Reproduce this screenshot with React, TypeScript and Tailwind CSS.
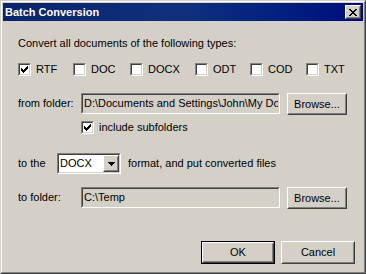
import React from "react";

function Pixels({ rows, color = "#000000" }: { rows: string[]; color?: string }) {
  const rects: React.ReactElement[] = [];
  rows.forEach((r, y) => {
    for (let x = 0; x < r.length; x++) {
      if (r[x] === "X") rects.push(<rect key={`${x}-${y}`} x={x} y={y} width={1} height={1} />);
    }
  });
  return (
    <svg
      width={rows[0].length}
      height={rows.length}
      viewBox={`0 0 ${rows[0].length} ${rows.length}`}
      shapeRendering="crispEdges"
      fill={color}
      className="block"
    >
      {rects}
    </svg>
  );
}

const CHECK = [
  "......X",
  ".....XX",
  "X...XXX",
  "XX.XXX.",
  "XXXXX..",
  ".XXX...",
  "..X....",
];

const CLOSE = [
  "XX....XX",
  ".XX..XX.",
  "..XXXX..",
  "...XX...",
  "..XXXX..",
  ".XX..XX.",
  "XX....XX",
];

const ARROW = ["XXXXXXX", ".XXXXX.", "..XXX..", "...X..."];

function Raised({ className, children }: { className: string; children?: React.ReactNode }) {
  return (
    <div className={`border border-t-white border-l-white border-r-[#404040] border-b-[#404040] ${className}`}>
      <div className="h-full w-full border border-t-[#d4d0c8] border-l-[#d4d0c8] border-r-[#808080] border-b-[#808080] flex items-center justify-center">
        {children}
      </div>
    </div>
  );
}

function Sunken({ className, inner, children }: { className: string; inner: string; children?: React.ReactNode }) {
  return (
    <div className={`border border-t-[#808080] border-l-[#808080] border-r-white border-b-white ${className}`}>
      <div className={`h-full w-full border border-t-[#404040] border-l-[#404040] border-r-[#d4d0c8] border-b-[#d4d0c8] ${inner}`}>
        {children}
      </div>
    </div>
  );
}

function CheckBox({ checked }: { checked: boolean }) {
  return (
    <Sunken className="w-[13px] h-[13px] shrink-0" inner="bg-white flex items-center justify-center">
      {checked ? <Pixels rows={CHECK} /> : null}
    </Sunken>
  );
}

function CheckItem({ label, checked }: { label: string; checked: boolean }) {
  return (
    <div className="flex items-center gap-[5px] h-[13px]">
      <CheckBox checked={checked} />
      <span>{label}</span>
    </div>
  );
}

export default function App() {
  return (
    <div className="w-[366px] h-[274px] bg-[#d4d0c8] font-['Liberation_Sans',Arial,sans-serif]">
      <div className="w-full h-full border border-t-[#d4d0c8] border-l-[#d4d0c8] border-r-[#404040] border-b-[#404040]">
        <div className="w-full h-full border border-t-white border-l-white border-r-[#808080] border-b-[#808080] p-px flex flex-col">
          <div className="h-[18px] shrink-0 flex items-center justify-between pl-[2px] pr-[2px] bg-gradient-to-r from-[#0a246a] via-[#10307e] to-[#00087f]">
            <span className="text-white font-bold text-[11px] leading-[13px]">Batch Conversion</span>
            <Raised className="w-[16px] h-[14px] bg-[#d4d0c8]">
              <Pixels rows={CLOSE} />
            </Raised>
          </div>
          <div className="flex flex-col pl-[15px] pt-[16px] text-[11px] leading-[13px] text-black">
            <div>Convert all documents of the following types:</div>
            <div className="mt-[13px] grid grid-cols-[55px_57px_65px_55px_56px_auto] h-[13px]">
              <CheckItem label="RTF" checked={true} />
              <CheckItem label="DOC" checked={false} />
              <CheckItem label="DOCX" checked={false} />
              <CheckItem label="ODT" checked={false} />
              <CheckItem label="COD" checked={false} />
              <CheckItem label="TXT" checked={false} />
            </div>
            <div className="mt-[17px] flex items-start h-[22px]">
              <div className="w-[63px] h-[21px] flex items-center">from folder:</div>
              <Sunken className="w-[199px] h-[21px]" inner="bg-[#d4d0c8] flex items-center pl-[1px] overflow-hidden whitespace-nowrap">
                D:\Documents and Settings\John\My Documents
              </Sunken>
              <Raised className="ml-[7px] w-[60px] h-[22px]">Browse...</Raised>
            </div>
            <div className="mt-[6px] ml-[63px]">
              <CheckItem label="include subfolders" checked={true} />
            </div>
            <div className="mt-[19px] flex items-center h-[21px]">
              <div className="w-[39px]">to the</div>
              <Sunken className="w-[64px] h-[21px]" inner="bg-white flex items-stretch">
                <div className="flex-1 flex items-center pl-[1px]">DOCX</div>
                <Raised className="w-[16px] h-full bg-[#d4d0c8]">
                  <Pixels rows={ARROW} />
                </Raised>
              </Sunken>
              <div className="ml-[7px]">format, and put converted files</div>
            </div>
            <div className="mt-[13px] flex items-start h-[22px]">
              <div className="w-[63px] h-[21px] flex items-center">to folder:</div>
              <Sunken className="w-[199px] h-[21px]" inner="bg-[#d4d0c8] flex items-center pl-[1px] overflow-hidden whitespace-nowrap">
                C:\Temp
              </Sunken>
              <Raised className="ml-[7px] w-[60px] h-[22px]">Browse...</Raised>
            </div>
            <div className="mt-[32px] flex justify-end gap-[6px] pr-[8px]">
              <div className="w-[74px] h-[23px] border border-black">
                <Raised className="w-full h-full">OK</Raised>
              </div>
              <Raised className="w-[74px] h-[23px]">Cancel</Raised>
            </div>
          </div>
        </div>
      </div>
    </div>
  );
}
